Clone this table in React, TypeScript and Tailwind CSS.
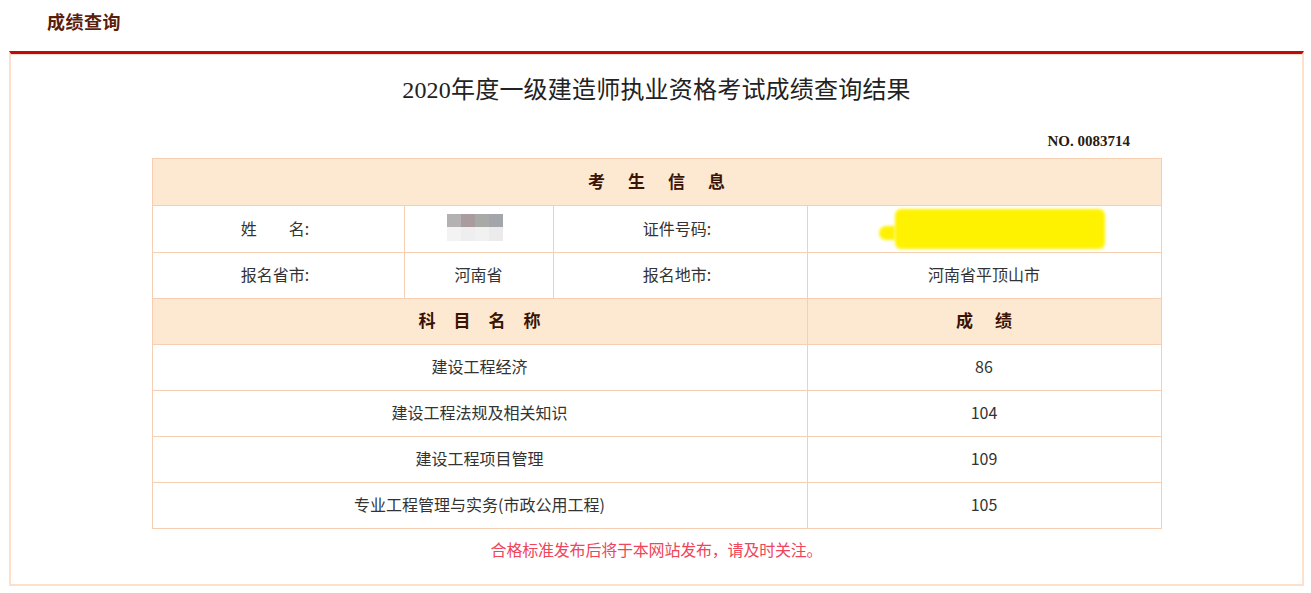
import React from "react";

const serif = { fontFamily: '"Liberation Serif", "Noto Sans CJK SC", serif' };

function Spaced({ chars, gap }: { chars: string[]; gap: string }) {
  return (
    <div className={`flex justify-center ${gap}`}>
      {chars.map((c, i) => (
        <span key={i}>{c}</span>
      ))}
    </div>
  );
}

export default function App() {
  const td = "border border-[#f6cfb3] text-center align-middle p-0 pb-[3px]";
  const subjects: [string, string][] = [
    ["建设工程经济", "86"],
    ["建设工程法规及相关知识", "104"],
    ["建设工程项目管理", "109"],
    ["专业工程管理与实务(市政公用工程)", "105"],
  ];
  return (
    <div
      className="w-[1311px] h-[593px] bg-white text-[#333]"
      style={{ fontFamily: '"Noto Sans CJK SC", "Noto Sans", sans-serif' }}
    >
      <div className="h-[51px] pl-[47px] pt-[12px]">
        <div
          className="text-[18px] leading-[22px] font-bold text-[#5b1d0c] tracking-[0.5px]"
          style={serif}
        >
          成绩查询
        </div>
      </div>

      <div className="ml-[9px] w-[1295px] h-[535px] border-t-[3px] border-t-[#c20a0a] border-x-2 border-b-2 border-x-[#fde0cb] border-b-[#fde0cb] flex flex-col items-center">
        <div className="w-full h-px bg-[#fde0cb]" />
        <div
          className="mt-[19px] text-[24px] leading-[32px] text-[#222] tracking-[0.2px]"
          style={serif}
        >
          2020年度一级建造师执业资格考试成绩查询结果
        </div>
        <div className="w-[1009px] flex justify-end pr-[31px] mt-[25px]">
          <div
            className="text-[15px] leading-[20px] font-bold text-[#2a1a10]"
            style={serif}
          >
            NO. 0083714
          </div>
        </div>

        <table className="mt-[7px] w-[1009px] table-fixed border-collapse border border-[#f1c2a2] text-[16px]">
          <colgroup>
            <col className="w-[252px]" />
            <col className="w-[149px]" />
            <col className="w-[254px]" />
            <col className="w-[354px]" />
          </colgroup>
          <tbody>
            <tr className="h-[47px] bg-[#fde9d2]">
              <td colSpan={4} className={`${td} font-bold text-[17px] text-[#3b1305]`}>
                <Spaced chars={["考", "生", "信", "息"]} gap="gap-[23px]" />
              </td>
            </tr>
            <tr className="h-[46px]">
              <td className={td}>
                <span className="pr-[6px]">
                  <span>姓</span>
                  <span className="inline-block w-[32px]" />
                  <span>名:</span>
                </span>
              </td>
              <td className={td}>
                <div className="flex justify-center pr-[8px]">
                  <div className="flex flex-col">
                    <div className="flex">
                      <div className="w-[14px] h-[13px] bg-[#b3b1b2]" />
                      <div className="w-[14px] h-[13px] bg-[#a99b9e]" />
                      <div className="w-[14px] h-[13px] bg-[#a7aaa7]" />
                      <div className="w-[14px] h-[13px] bg-[#a2a6aa]" />
                    </div>
                    <div className="flex">
                      <div className="w-[14px] h-[14px] bg-[#f3f3f3]" />
                      <div className="w-[14px] h-[14px] bg-[#eeeeee]" />
                      <div className="w-[14px] h-[14px] bg-[#f1f1f1]" />
                      <div className="w-[14px] h-[14px] bg-[#ebebeb]" />
                    </div>
                  </div>
                </div>
              </td>
              <td className={td}>
                <span className="pr-[6px]">证件号码:</span>
              </td>
              <td className={td}>
                <div className="flex items-center justify-center pl-[16px] pt-[3px]">
                  <div className="w-[16px] h-[14px] bg-[#fff200] blur-[1.5px] rounded-l-full mt-[8px]" />
                  <div className="w-[210px] h-[40px] bg-[#fff200] blur-[1.5px] rounded-[6px]" />
                </div>
              </td>
            </tr>
            <tr className="h-[46px]">
              <td className={td}>
                <span className="pr-[6px]">报名省市:</span>
              </td>
              <td className={td}>河南省</td>
              <td className={td}>
                <span className="pr-[6px]">报名地市:</span>
              </td>
              <td className={td}>河南省平顶山市</td>
            </tr>
            <tr className="h-[46px] bg-[#fde9d2] font-bold text-[17px] text-[#3b1305]">
              <td colSpan={3} className={td}>
                <Spaced chars={["科", "目", "名", "称"]} gap="gap-[18px]" />
              </td>
              <td className={td}>
                <Spaced chars={["成", "绩"]} gap="gap-[22px]" />
              </td>
            </tr>
            {subjects.map(([name, score]) => (
              <tr key={name} className="h-[46px]">
                <td colSpan={3} className={td}>
                  {name}
                </td>
                <td className={td}>{score}</td>
              </tr>
            ))}
          </tbody>
        </table>

        <div
          className="mt-[12px] text-[16px] leading-[20px] text-[#f0455a] tracking-[-0.2px]"
          style={serif}
        >
          合格标准发布后将于本网站发布，请及时关注。
        </div>
      </div>
    </div>
  );
}
